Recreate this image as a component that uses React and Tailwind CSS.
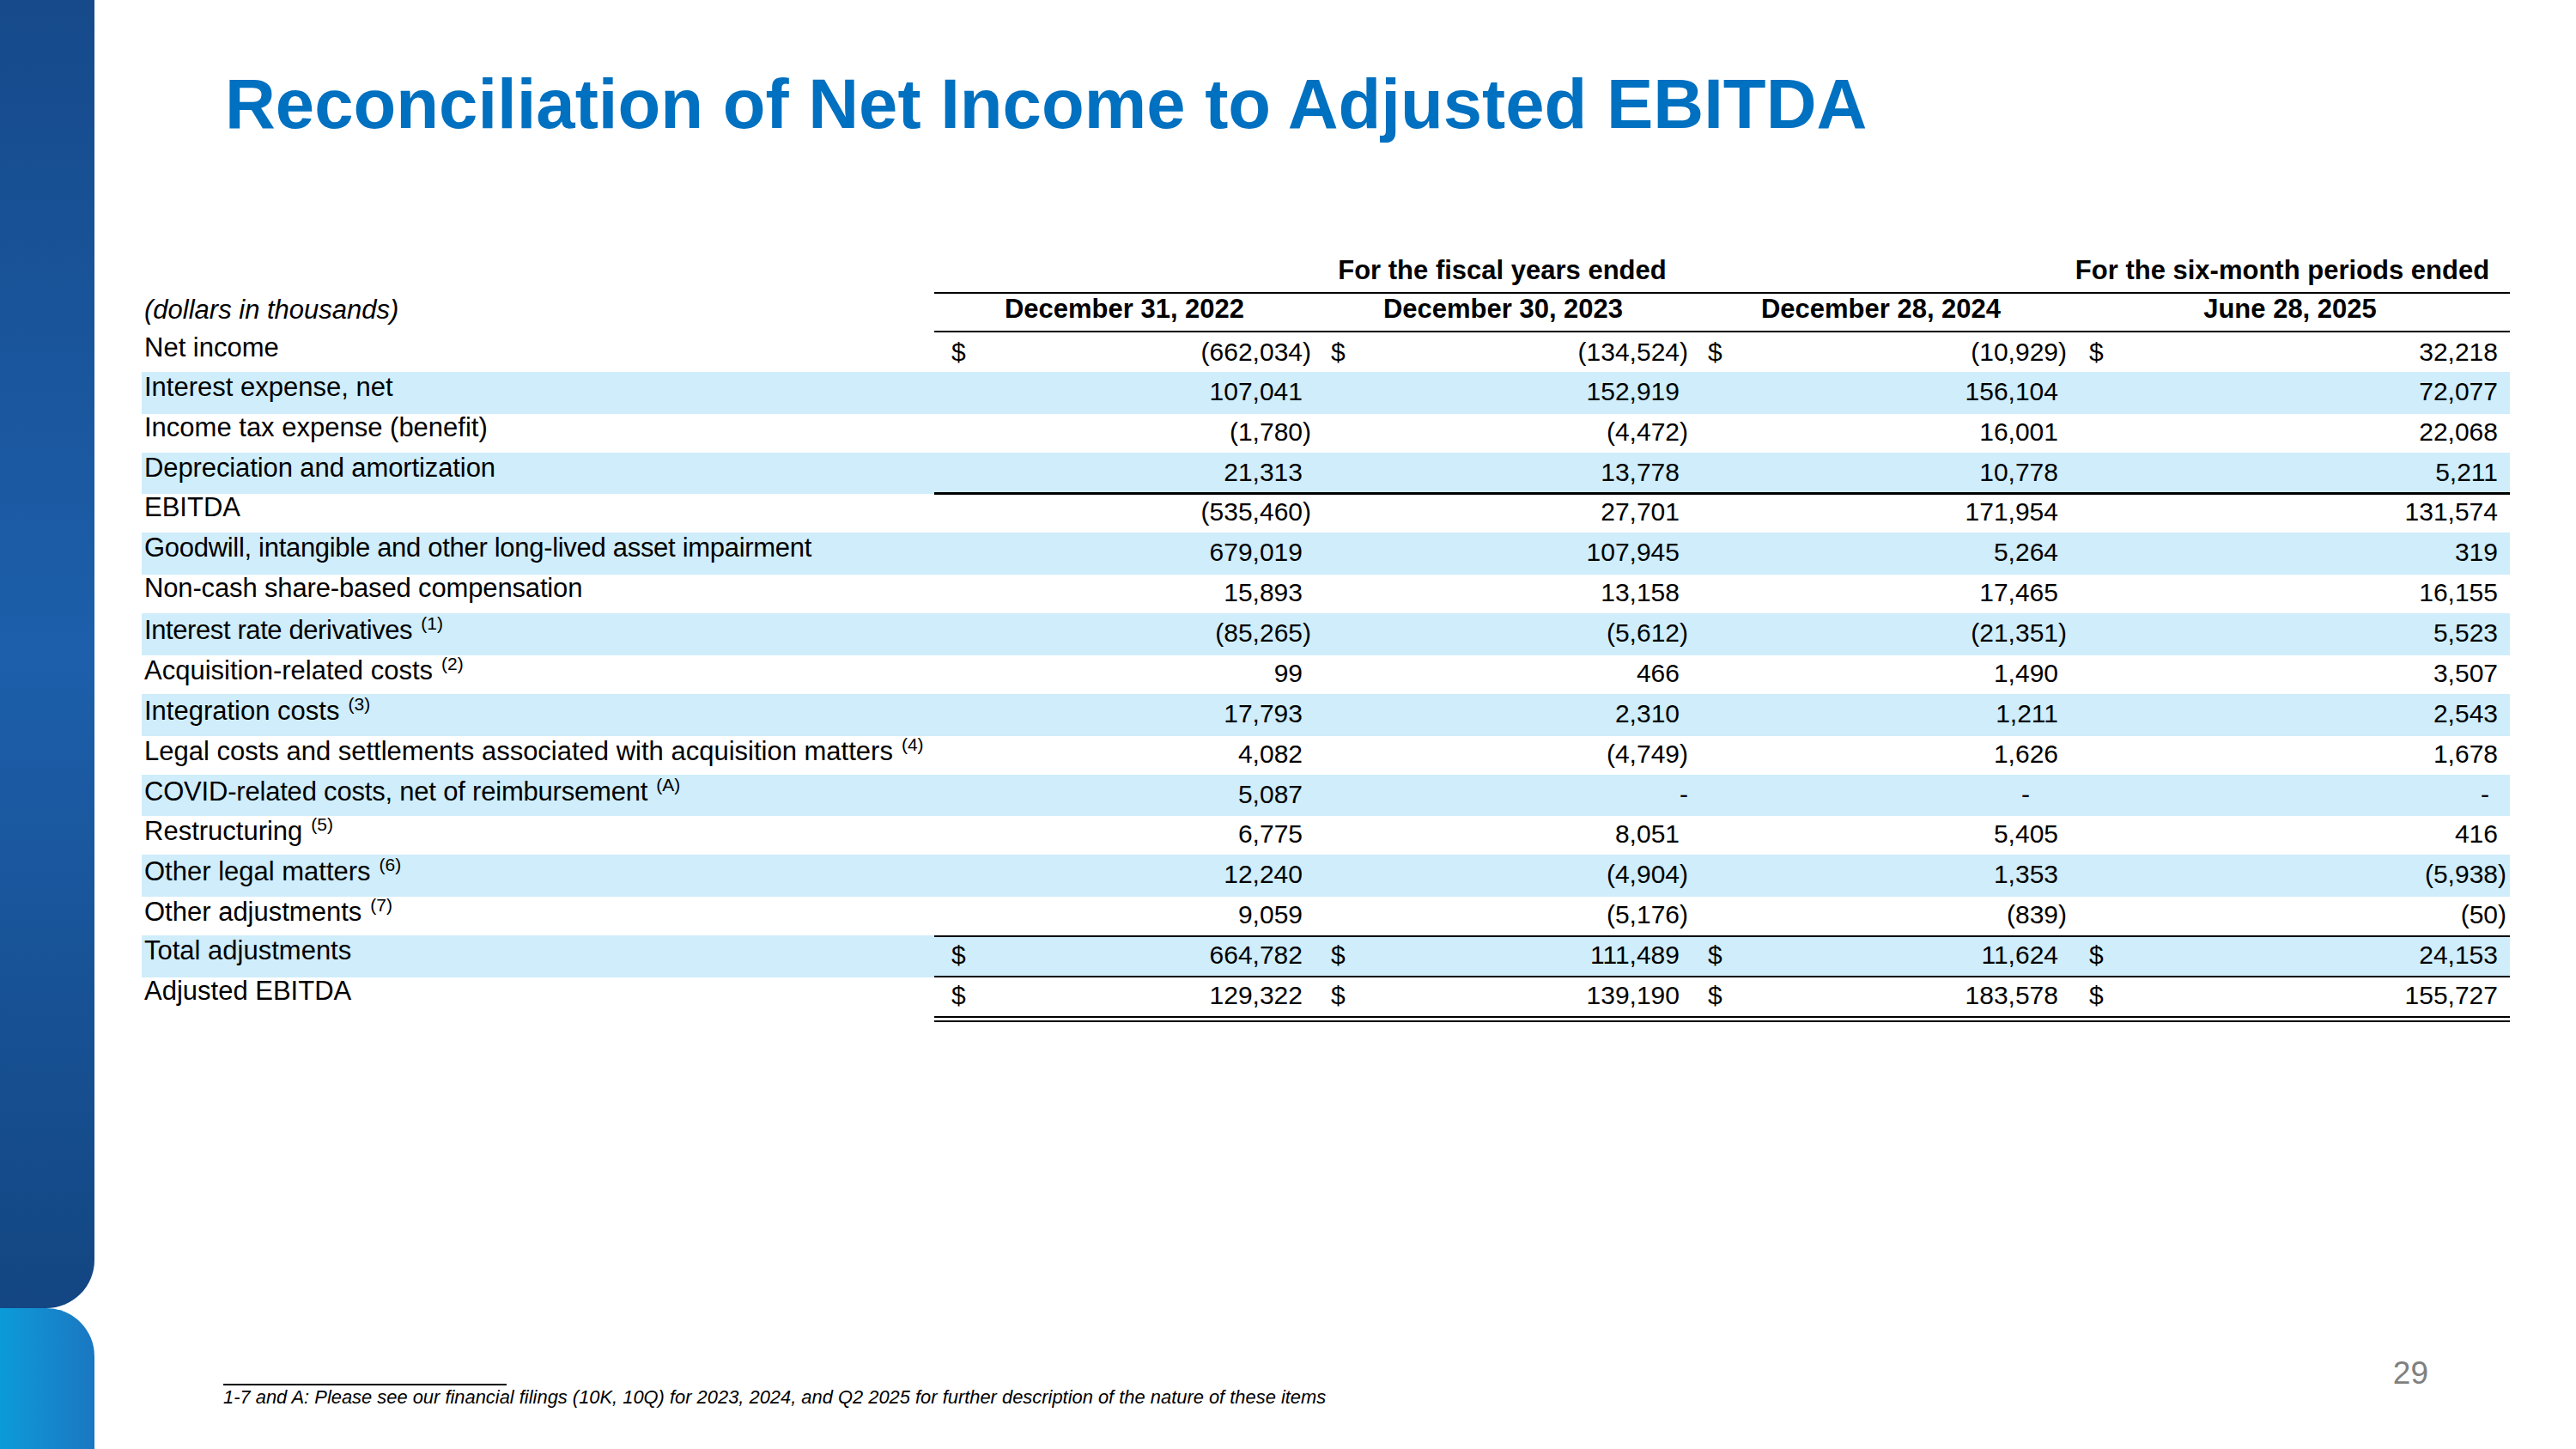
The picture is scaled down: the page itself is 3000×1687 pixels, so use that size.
import React from 'react'

// column widths + padding for the four amount columns (label column is 923px)
const COLS = [
  'w-[443px] pl-[20px] pr-[4px]',
  'w-[439px] pl-[19px] pr-[4px]',
  'w-[441px] pl-[19px] pr-[4px]',
  'w-[512px] pl-[22px] pr-[4px]',
]
// the "-" cells don't line up with the numbers in the source
const DASH_MR = ['mr-[10px]', 'mr-0', 'mr-[43px]', 'mr-[20px]']

const rows = [
  { label: 'Net income', dollar: true, h: 'h-[46px]', v: ['(662,034)', '(134,524)', '(10,929)', '32,218'] },
  { label: 'Interest expense, net', h: 'h-[47px]', v: ['107,041', '152,919', '156,104', '72,077'] },
  { label: 'Income tax expense (benefit)', h: 'h-[47px]', v: ['(1,780)', '(4,472)', '16,001', '22,068'] },
  { label: 'Depreciation and amortization', h: 'h-[46px]', track: 'tracking-[-0.1px]', v: ['21,313', '13,778', '10,778', '5,211'] },
  { label: 'EBITDA', h: 'h-[47px]', line: 'border-t-[3px] pt-[3px]', v: ['(535,460)', '27,701', '171,954', '131,574'] },
  { label: 'Goodwill, intangible and other long-lived asset impairment', h: 'h-[47px]', track: 'tracking-[-0.3px]', v: ['679,019', '107,945', '5,264', '319'] },
  { label: 'Non-cash share-based compensation', h: 'h-[47px]', track: 'tracking-[-0.15px]', v: ['15,893', '13,158', '17,465', '16,155'] },
  { label: 'Interest rate derivatives', note: '(1)', h: 'h-[47px]', track: 'tracking-[-0.4px]', v: ['(85,265)', '(5,612)', '(21,351)', '5,523'] },
  { label: 'Acquisition-related costs', note: '(2)', h: 'h-[47px]', v: ['99', '466', '1,490', '3,507'] },
  { label: 'Integration costs', note: '(3)', h: 'h-[47px]', v: ['17,793', '2,310', '1,211', '2,543'] },
  { label: 'Legal costs and settlements associated with acquisition matters', note: '(4)', h: 'h-[47px]', v: ['4,082', '(4,749)', '1,626', '1,678'] },
  { label: 'COVID-related costs, net of reimbursement', note: '(A)', h: 'h-[46px]', track: 'tracking-[-0.2px]', v: ['5,087', '-', '-', '-'] },
  { label: 'Restructuring', note: '(5)', h: 'h-[47px]', v: ['6,775', '8,051', '5,405', '416'] },
  { label: 'Other legal matters', note: '(6)', h: 'h-[47px]', v: ['12,240', '(4,904)', '1,353', '(5,938)'] },
  { label: 'Other adjustments', note: '(7)', h: 'h-[47px]', v: ['9,059', '(5,176)', '(839)', '(50)'] },
  { label: 'Total adjustments', dollar: true, h: 'h-[47px]', line: 'border-t-2 pt-[4px]', v: ['664,782', '111,489', '11,624', '24,153'] },
  { label: 'Adjusted EBITDA', dollar: true, h: 'h-[54px]', line: 'border-t-2 border-b-[7px] border-double pt-[4px]', v: ['129,322', '139,190', '183,578', '155,727'] },
]

function Amount({ value, col, dollar, line }) {
  const neg = value.startsWith('(')
  return (
    <div className={`flex justify-between border-black ${COLS[col]} ${line || 'pt-[6px]'}`}>
      <span>{dollar ? '$' : ''}</span>
      {value === '-'
        ? <span className={DASH_MR[col]}>-</span>
        : <span>{value}{!neg && <span className="invisible">)</span>}</span>}
    </div>
  )
}

function Row({ row, blue }) {
  return (
    <div className={`flex ${row.h} ${blue ? 'bg-[#cfedfb] shadow-[0_2px_0_0_#cfedfb]' : ''}`}>
      <div className={`w-[923px] whitespace-nowrap pl-[3px] pt-[1px] text-[31px] ${row.track || ''}`}>
        {row.label}
        {row.note && <span className="ml-[10px] align-[11px] text-[21px] leading-none tracking-normal">{row.note}</span>}
      </div>
      {row.v.map((v, i) => (
        <Amount key={i} value={v} col={i} dollar={row.dollar} line={row.line} />
      ))}
    </div>
  )
}

export default function App() {
  return (
    <div className="flex h-[1687px] w-[3000px] overflow-hidden bg-white font-['Liberation_Sans',Arial,sans-serif] text-black">
      {/* left brand bar */}
      <aside className="flex w-[110px] shrink-0 flex-col">
        <div className="h-[1523px] rounded-br-[56px] bg-linear-to-b from-[#164a8b] via-[#1d5fab] to-[#134682]" />
        <div className="flex-1 rounded-tr-[56px] bg-linear-to-r from-[#0a9bd9] to-[#1a77c1]" />
      </aside>

      <main className="flex flex-1 flex-col">
        <h1 className="pl-[152px] pt-[80px] text-[81.5px] font-bold leading-none text-[#0070c0]">
          Reconciliation of Net Income to Adjusted EBITDA
        </h1>

        {/* table */}
        <div className="ml-[55px] mt-[134px] w-[2758px] text-[30px] leading-[34px]">
          <div className="flex h-[46px] font-bold">
            <div className="w-[923px]" />
            <div className="w-[1323px] border-b-2 border-black pt-[2px] text-center text-[31px]">For the fiscal years ended</div>
            <div className="w-[512px] border-b-2 border-black pr-[18px] pt-[2px] text-center text-[31px]">For the six-month periods ended</div>
          </div>
          <div className="flex h-[45px]">
            <div className="w-[923px] pl-[3px] pt-[2px] text-[31px] italic">(dollars in thousands)</div>
            {['December 31, 2022', 'December 30, 2023', 'December 28, 2024', 'June 28, 2025'].map((d, i) => (
              <div key={d} className={`${['w-[443px]', 'w-[439px]', 'w-[441px]', 'w-[512px]'][i]} border-b-2 border-black pt-[1px] text-center text-[31px] font-bold`}>
                {d}
              </div>
            ))}
          </div>
          {rows.map((r, i) => <Row key={r.label} row={r} blue={i % 2 === 1} />)}
        </div>

        {/* footnote + page number */}
        <footer className="mt-auto flex items-start justify-between pb-[47px]">
          <div className="pl-[150px] pt-[31px]">
            <div className="h-[2px] w-[330px] bg-black" />
            <p className="mt-[1px] text-[21.9px] italic leading-[26px]">
              1-7 and A: Please see our financial filings (10K, 10Q) for 2023, 2024, and Q2 2025 for further description of the nature of these items
            </p>
          </div>
          <div className="pr-[172px] text-[37px] leading-none text-[#808080]">29</div>
        </footer>
      </main>
    </div>
  )
}
